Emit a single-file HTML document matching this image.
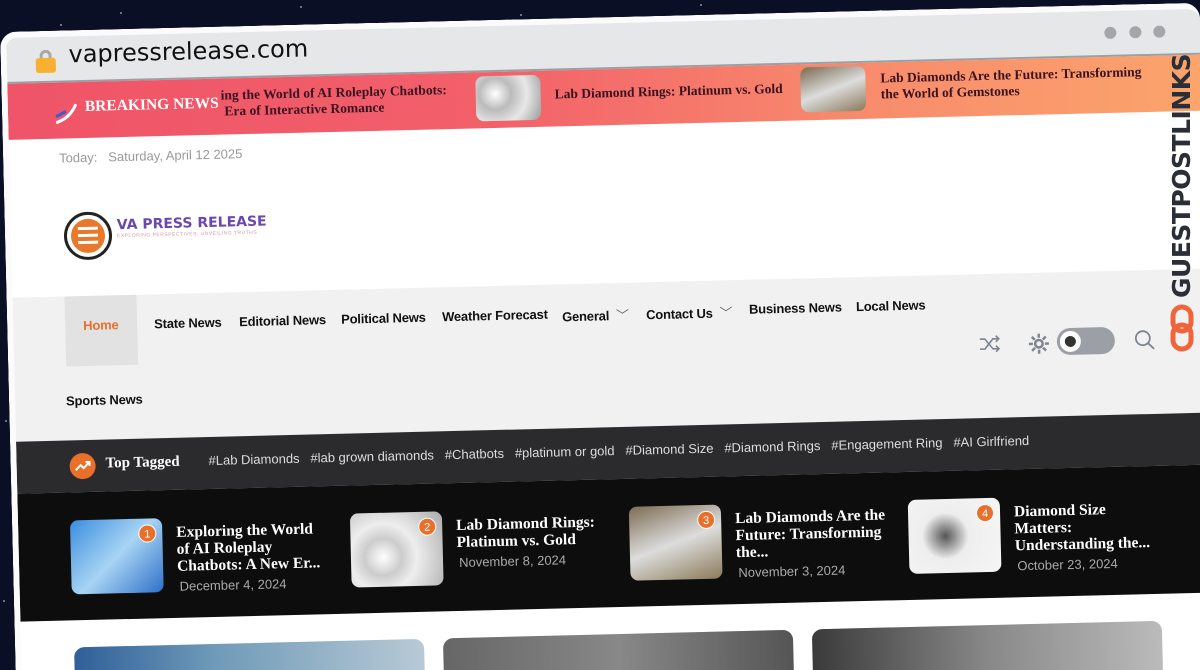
<!DOCTYPE html>
<html><head><meta charset="utf-8"><style>
*{margin:0;padding:0;box-sizing:border-box}
html,body{width:1200px;height:670px;overflow:hidden}
body{background:#0a0f26;position:relative;font-family:"Liberation Sans",sans-serif}
.star{position:absolute;width:2px;height:2px;background:#8890aa;border-radius:50%}
#win{position:absolute;left:0;top:32px;width:1200px;height:668px;background:#fff;border-radius:16px 16px 0 0;transform-origin:0 0;transform:rotate(-1.4deg);overflow:hidden;border:6px solid #fbfbfb;border-right:none;border-bottom:none}
.a{position:absolute;white-space:nowrap}
.serif{font-family:"Liberation Serif","DejaVu Serif",serif;font-weight:bold}
.nav{font-size:13px;font-weight:bold;color:#111;top:282px;letter-spacing:-0.2px}
.tag{font-size:13px;color:#ddd;top:420px}
.ct{font-size:15.5px;color:#fff;line-height:17px;font-family:"Liberation Serif",serif;font-weight:bold;white-space:normal;width:150px}
.cd{font-size:13px;color:#aaa}
.badge{position:absolute;width:18px;height:18px;border-radius:50%;background:#e8702a;color:#fff;font-size:11px;text-align:center;line-height:18px;border:1px solid #fff}
</style></head><body>
<div class="star" style="left:120px;top:12px"></div><div class="star" style="left:300px;top:6px"></div><div class="star" style="left:520px;top:14px"></div><div class="star" style="left:700px;top:4px"></div><div class="star" style="left:880px;top:10px"></div><div class="star" style="left:60px;top:24px"></div><div class="star" style="left:5px;top:420px"></div><div class="star" style="left:3px;top:600px"></div>
<div id="win">
 <div class="a" style="left:0;top:0;width:1200px;height:46px;background:#e6e7e9;border-bottom:2px solid #9aa0a6"></div>
 <div class="a" style="left:29px;top:13px;width:20px;height:18px">
  <div style="position:absolute;left:4px;top:0;width:12px;height:12px;border:3px solid #a8a8a8;border-bottom:none;border-radius:6px 6px 0 0"></div>
  <div style="position:absolute;left:0;top:8px;width:20px;height:15px;background:#f7b030;border-radius:3px"></div></div>
 <div class="a" style="left:62px;top:4px;font-size:24px;color:#111;font-family:'DejaVu Sans',sans-serif">vapressrelease.com</div>
 <div class="a" style="left:1098px;top:16px;width:12px;height:12px;border-radius:50%;background:#a4a6a9"></div>
 <div class="a" style="left:1123px;top:16px;width:12px;height:12px;border-radius:50%;background:#a4a6a9"></div>
 <div class="a" style="left:1147px;top:16px;width:12px;height:12px;border-radius:50%;background:#a4a6a9"></div>
 <div class="a" style="left:0;top:46px;width:1200px;height:56px;background:linear-gradient(90deg,#ef5468,#f2606a 40%,#f88a6c 70%,#fba56c)"></div>
 <svg class="a" style="left:44px;top:62px" width="28" height="28"><path d="M4 24 Q18 20 24 6" stroke="#fff" stroke-width="3" fill="none"/><path d="M4 18 L14 13" stroke="#3c5ad8" stroke-width="3"/></svg>
 <div class="a serif" style="left:77px;top:62px;font-size:15.5px;color:#fff">BREAKING NEWS</div>
 <div class="a serif" style="left:213px;top:55px;font-size:13.5px;color:#3a1220;line-height:16px">ing the World of AI Roleplay Chatbots:<br>&nbsp;Era of Interactive Romance</div>
 <div class="a" style="left:468px;top:50px;width:65px;height:45px;border-radius:8px;background:radial-gradient(circle at 30% 40%,#fff,#bbb 30%,#e8e8e8 60%,#999)"></div>
 <div class="a serif" style="left:547px;top:62px;font-size:13.5px;color:#3a1220">Lab Diamond Rings: Platinum vs. Gold</div>
 <div class="a" style="left:793px;top:49px;width:65px;height:45px;border-radius:8px;background:linear-gradient(160deg,#7a6a50,#ddd 50%,#8a7a5a)"></div>
 <div class="a serif" style="left:873px;top:54px;font-size:13.5px;color:#3a1220;line-height:16px">Lab Diamonds Are the Future: Transforming<br>the World of Gemstones</div>
 <div class="a" style="left:50px;top:114px;font-size:13px;color:#999">Today: &nbsp; Saturday, April 12 2025</div>
 <div class="a" style="left:53px;top:176px;width:48px;height:48px;border-radius:50%;border:3px solid #222;background:#fff"><div style="position:absolute;left:4px;top:4px;width:34px;height:34px;border-radius:50%;background:#e8782a"></div><div style="position:absolute;left:11px;top:12px;width:20px;height:3px;background:#fff;box-shadow:0 7px 0 #fff,0 14px 0 #fff"></div></div>
 <div class="a" style="left:106px;top:182px;font-size:14px;font-weight:bold;color:#6b47b0;font-family:'DejaVu Sans',sans-serif">VA PRESS RELEASE</div>
 <div class="a" style="left:106px;top:198px;font-size:5px;color:#d89aa8;letter-spacing:.5px">EXPLORING PERSPECTIVES, UNVEILING TRUTHS</div>
 <div class="a" style="left:0;top:260px;width:1200px;height:144px;background:#f1f1f2"></div>
 <div class="a" style="left:52px;top:260px;width:72px;height:70px;background:#e2e2e3"></div>
 <div class="a nav" style="left:70px;color:#e8702a">Home</div>
 <div class="a nav" style="left:141px">State News</div>
 <div class="a nav" style="left:226px">Editorial News</div>
 <div class="a nav" style="left:328px">Political News</div>
 <div class="a nav" style="left:429px">Weather Forecast</div>
 <div class="a nav" style="left:549px">General <span style="font-weight:normal;color:#666">&nbsp;﹀</span></div>
 <div class="a nav" style="left:633px">Contact Us <span style="font-weight:normal;color:#666">&nbsp;﹀</span></div>
 <div class="a nav" style="left:736px">Business News</div>
 <div class="a nav" style="left:843px">Local News</div>
 <div class="a nav" style="left:51px;top:357px">Sports News</div>
 <svg class="a" style="left:965px;top:320px" width="22" height="20" fill="none" stroke="#7d8590" stroke-width="1.6"><path d="M1 5h5l8 10h6M1 15h5l8-10h6M17 2l3 3-3 3M17 12l3 3-3 3"/></svg>
 <svg class="a" style="left:1014px;top:320px" width="22" height="22"><circle cx="11" cy="11" r="5" fill="#7d8590"/><g stroke="#7d8590" stroke-width="2.5"><path d="M11 1v4M11 17v4M1 11h4M17 11h4M4 4l3 3M15 15l3 3M4 18l3-3M15 7l3-3"/></g><circle cx="11" cy="11" r="2.5" fill="#f1f1f2"/></svg>
 <div class="a" style="left:1043px;top:316px;width:58px;height:27px;border-radius:14px;background:#9ca0a6"><div style="position:absolute;left:3px;top:3px;width:21px;height:21px;border-radius:50%;background:#fff"><div style="position:absolute;left:5px;top:5px;width:11px;height:11px;border-radius:50%;background:#333"></div></div></div>
 <svg class="a" style="left:1120px;top:319px" width="22" height="22" fill="none" stroke="#7d8590" stroke-width="1.8"><circle cx="9" cy="9" r="7"/><path d="M14 14l6 6"/></svg>
 <div class="a" style="left:0;top:404px;width:1200px;height:52px;background:#2b2b2e"></div>
 <div class="a" style="left:53px;top:417px;width:26px;height:26px;border-radius:50%;background:#e8702a"><svg width="26" height="26" fill="none" stroke="#fff" stroke-width="2"><path d="M6 17l5-5 3 3 6-6M16 9h4v4"/></svg></div>
 <div class="a serif" style="left:89px;top:420px;font-size:15px;color:#fff">Top Tagged</div>
 <div class="a tag" style="left:192px">#Lab Diamonds &nbsp; #lab grown diamonds &nbsp; #Chatbots &nbsp; #platinum or gold &nbsp; #Diamond Size &nbsp; #Diamond Rings &nbsp; #Engagement Ring &nbsp; #AI Girlfriend</div>
 <div class="a" style="left:0;top:456px;width:1200px;height:128px;background:#0d0d0d"></div>
 <div class="a" style="left:52px;top:484px;width:92px;height:74px;border-radius:8px;background:linear-gradient(135deg,#3a8ee0,#a8d4f4 50%,#2e6fc8)"></div><div class="badge" style="left:120px;top:490px">1</div>
 <div class="a ct" style="left:158px;top:490px">Exploring the World of AI Roleplay Chatbots: A New Er...</div>
 <div class="a cd" style="left:160px;top:545px">December 4, 2024</div>
 <div class="a" style="left:332px;top:484px;width:92px;height:74px;border-radius:8px;background:radial-gradient(circle at 35% 60%,#fff,#ccc 25%,#eee 45%,#aaa)"></div><div class="badge" style="left:400px;top:490px">2</div>
 <div class="a ct" style="left:438px;top:490px;width:160px">Lab Diamond Rings: Platinum vs. Gold</div>
 <div class="a cd" style="left:440px;top:528px">November 8, 2024</div>
 <div class="a" style="left:611px;top:484px;width:92px;height:74px;border-radius:8px;background:linear-gradient(160deg,#7c6c52,#ddd 50%,#8a7a5a)"></div><div class="badge" style="left:679px;top:490px">3</div>
 <div class="a ct" style="left:717px;top:490px">Lab Diamonds Are the Future: Transforming the...</div>
 <div class="a cd" style="left:719px;top:545px">November 3, 2024</div>
 <div class="a" style="left:890px;top:484px;width:92px;height:74px;border-radius:8px;background:radial-gradient(circle at 40% 50%,#555,#eee 35%,#f6f6f6)"></div><div class="badge" style="left:958px;top:490px">4</div>
 <div class="a ct" style="left:996px;top:490px">Diamond Size Matters: Understanding the...</div>
 <div class="a cd" style="left:998px;top:545px">October 23, 2024</div>
 <div class="a" style="left:53px;top:611px;width:350px;height:60px;border-radius:10px 10px 0 0;background:linear-gradient(90deg,#2f5f98,#6f9ab8 40%,#b8cad6)"></div>
 <div class="a" style="left:422px;top:611px;width:350px;height:60px;border-radius:10px 10px 0 0;background:linear-gradient(90deg,#666,#888 50%,#555)"></div>
 <div class="a" style="left:791px;top:611px;width:350px;height:60px;border-radius:10px 10px 0 0;background:linear-gradient(90deg,#3a3a3a,#888 50%,#bbb)"></div>
</div>
<div style="position:absolute;left:1167px;top:298px;transform-origin:0 0;transform:rotate(-90deg);font-size:25px;font-weight:bold;color:#2a2e36;font-family:'DejaVu Sans',sans-serif;white-space:nowrap;letter-spacing:-0.5px">GUESTPOSTLINKS</div>
<svg style="position:absolute;left:1170px;top:304px" width="24" height="48" fill="none" stroke="#f0643a" stroke-width="5"><rect x="3" y="3" width="18" height="24" rx="9"/><rect x="3" y="21" width="18" height="24" rx="9"/></svg>
</body></html>
